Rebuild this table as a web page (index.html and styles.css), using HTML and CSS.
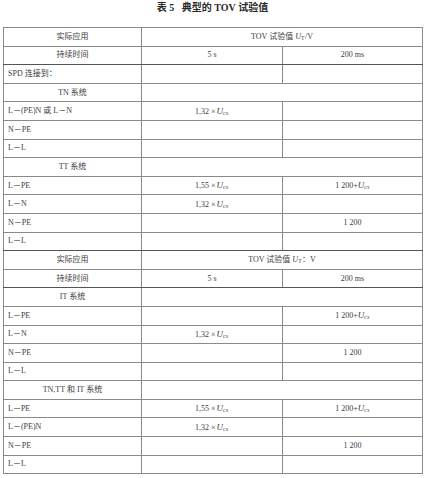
FILE: index.html
```html
<!DOCTYPE html>
<html lang="zh">
<head>
<meta charset="utf-8">
<title>表 5 典型的 TOV 试验值</title>
<link rel="stylesheet" href="styles.css">
</head>
<body>
<div class="page">
  <h1 class="title">表 5&nbsp;&nbsp;&nbsp;典型的 TOV 试验值</h1>
  <table class="tov">
    <colgroup>
      <col class="c1"><col class="c2"><col class="c3">
    </colgroup>
    <tbody>
      <tr><td class="ctr">实际应用</td><td class="ctr" colspan="2">TOV 试验值 <i>U</i><sub>T</sub>/V</td></tr>
      <tr class="thick"><td class="ctr">持续时间</td><td class="ctr">5 s</td><td class="ctr">200 ms</td></tr>
      <tr><td>SPD 连接到：</td><td></td><td></td></tr>
      <tr><td class="ctr">TN 系统</td><td colspan="2"></td></tr>
      <tr><td>L－(PE)N 或 L－N</td><td class="v">1,32<span class="x">×</span><i class="u">U</i><sub>cs</sub></td><td></td></tr>
      <tr><td>N－PE</td><td></td><td></td></tr>
      <tr><td>L－L</td><td></td><td></td></tr>
      <tr><td class="ctr">TT 系统</td><td colspan="2"></td></tr>
      <tr><td>L－PE</td><td class="v">1,55<span class="x">×</span><i class="u">U</i><sub>cs</sub></td><td class="ctr">1 200+<i class="u">U</i><sub>cs</sub></td></tr>
      <tr><td>L－N</td><td class="v">1,32<span class="x">×</span><i class="u">U</i><sub>cs</sub></td><td></td></tr>
      <tr><td>N－PE</td><td></td><td class="ctr">1 200</td></tr>
      <tr class="sect"><td>L－L</td><td></td><td></td></tr>
      <tr><td class="ctr">实际应用</td><td class="ctr" colspan="2">TOV 试验值 <i>U</i><sub>T</sub>：V</td></tr>
      <tr class="thick"><td class="ctr">持续时间</td><td class="ctr">5 s</td><td class="ctr">200 ms</td></tr>
      <tr><td class="ctr">IT 系统</td><td colspan="2"></td></tr>
      <tr><td>L－PE</td><td></td><td class="ctr">1 200+<i class="u">U</i><sub>cs</sub></td></tr>
      <tr><td>L－N</td><td class="v">1,32<span class="x">×</span><i class="u">U</i><sub>cs</sub></td><td></td></tr>
      <tr><td>N－PE</td><td></td><td class="ctr">1 200</td></tr>
      <tr><td>L－L</td><td></td><td></td></tr>
      <tr><td class="ctr">TN,TT 和 IT 系统</td><td colspan="2"></td></tr>
      <tr><td>L－PE</td><td class="v">1,55<span class="x">×</span><i class="u">U</i><sub>cs</sub></td><td class="ctr">1 200+<i class="u">U</i><sub>cs</sub></td></tr>
      <tr><td>L－(PE)N</td><td class="v">1,32<span class="x">×</span><i class="u">U</i><sub>cs</sub></td><td></td></tr>
      <tr><td>N－PE</td><td></td><td class="ctr">1 200</td></tr>
      <tr><td>L－L</td><td></td><td></td></tr>
    </tbody>
  </table>
</div>
</body>
</html>
```
FILE: styles.css
```css
html, body {
  margin: 0;
  padding: 0;
  background: #ffffff;
}

.page {
  padding: 0 3px 0 3px;
  font-family: "Liberation Serif", "Noto Sans CJK SC", serif;
  color: #3c3c3c;
}

.title {
  margin: 0 0 12px 0;
  height: 15px;
  line-height: 15px;
  font-size: 10px;
  font-weight: bold;
  text-align: center;
  color: #2a2a2a;
}

.tov {
  width: 419px;
  border-collapse: collapse;
  table-layout: fixed;
  border: 1.5px solid #555;
  font-size: 8px;
}

.c1 { width: 138px; }
.c2 { width: 141px; }
.c3 { width: 140px; }

.tov tr {
  height: 18.6px;
}

.tov td {
  border: 1px solid #8a8a8a;
  padding: 0 0 0 4px;
  line-height: 10px;
  vertical-align: middle;
  white-space: nowrap;
}

.tov td.ctr {
  text-align: center;
  padding-left: 0;
}

.tov td.v {
  padding-left: 53px;
}

.tov tr.thick td {
  border-bottom: 1.5px solid #555;
}

.tov tr.sect td {
  border-bottom: 1.5px solid #555;
}

.tov i {
  font-style: italic;
}

.tov .x {
  margin: 0 1px 0 2px;
}

.tov i.u {
  font-size: 9px;
}

.tov sub {
  font-size: 5.5px;
  line-height: 0;
  vertical-align: -1px;
  letter-spacing: 0.5px;
}
```
